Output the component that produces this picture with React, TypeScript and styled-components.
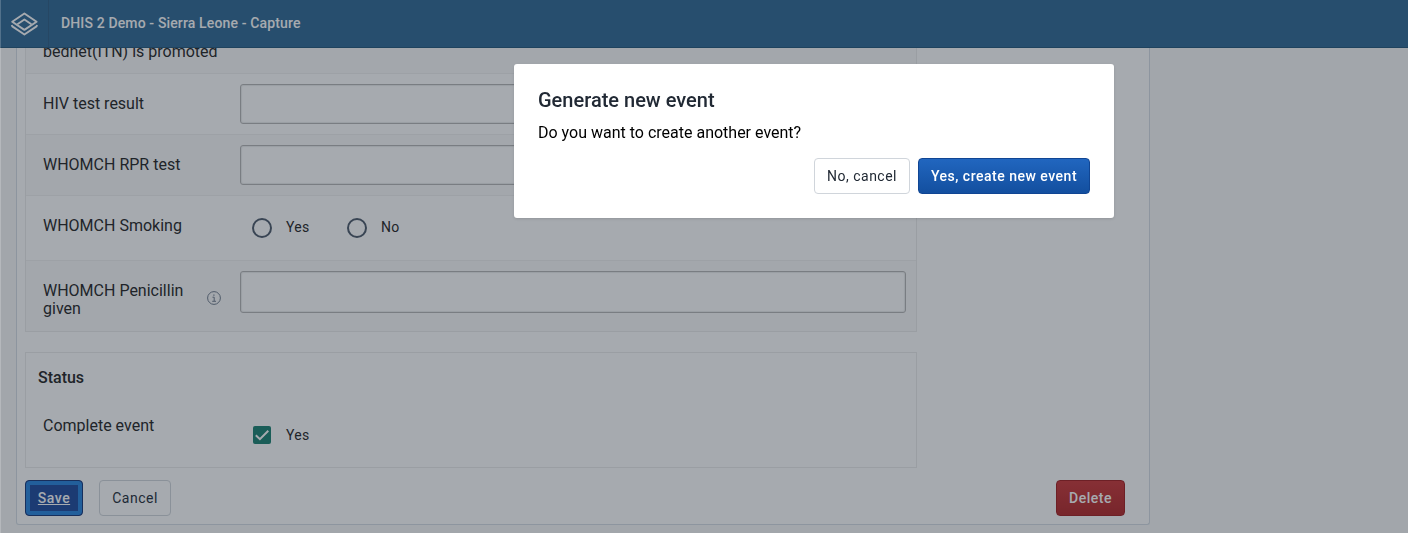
import React from 'react';
import styled, { createGlobalStyle, css } from 'styled-components';

const GlobalStyle = createGlobalStyle`
  * { box-sizing: border-box; }
  html, body { margin: 0; height: 100%; overflow: hidden; }
  body { font-family: Roboto, sans-serif; background: #f8f8f8; color: #212121; }
`;

const Page = styled.div`
  height: 533px;
  overflow: hidden;
  background: #f8f8f8;
`;

const HeaderBar = styled.header`
  display: flex;
  align-items: center;
  height: 48px;
  background: #2c6693;
  border-bottom: 1px solid #1f5479;
  color: #fff;
`;

const LogoLink = styled.div`
  display: flex;
  align-items: center;
  justify-content: center;
  width: 49px;
  height: 47px;
  border-right: 1px solid rgba(32, 32, 32, 0.15);
`;

const AppTitle = styled.div`
  padding-left: 12px;
  font-size: 14px;
  font-weight: 500;
  line-height: 47px;
  letter-spacing: 0.01em;
`;

const Viewport = styled.main`
  height: 485px;
  overflow: hidden;
`;

const Panel = styled.div`
  width: 1134px;
  height: 477px;
  margin-left: 16px;
  padding: 0 24px 0 8px;
  background: #fff;
  border: 1px solid #d5dde5;
  border-top: 0;
  border-radius: 0 0 3px 3px;
`;

const Section = styled.section<{ $continued?: boolean }>`
  width: 892px;
  border: 1px solid #ececec;
  border-top-width: ${(p) => (p.$continued ? 0 : 1)}px;
`;

const FieldRow = styled.div<{ $height: number; $shaded?: boolean; $pad?: number }>`
  display: flex;
  align-items: flex-start;
  height: ${(p) => p.$height}px;
  padding: ${(p) => p.$pad ?? 10}px 10px 0 17px;
  background: ${(p) => (p.$shaded ? '#fbfbfb' : '#fff')};
  & + & { border-top: 1px solid #f1f1f1; }
`;

const Label = styled.div`
  width: 162px;
  margin-right: 2px;
  padding-top: 11px;
  font-size: 16px;
  line-height: 18px;
  white-space: pre-line;
`;

const ScrolledLabel = styled(Label)`
  width: auto;
  margin-top: -5px;
  padding-top: 0;
`;

const InfoSlot = styled.div`
  display: flex;
  width: 33px;
  padding-top: 20px;
`;

const TextInput = styled.input<{ $tall?: boolean }>`
  flex: 1;
  height: ${(p) => (p.$tall ? 42 : 40)}px;
  border: 1px solid #b4b4b4;
  border-radius: 3px;
  background: #fff;
  box-shadow: inset 0 0 1px 1px rgba(48, 54, 60, 0.1);
`;

const Option = styled.div<{ $top: number }>`
  display: flex;
  align-items: center;
  gap: 14px;
  width: 95px;
  margin-top: ${(p) => p.$top}px;
  padding-left: 11px;
  font-size: 14px;
  line-height: 22px;
  letter-spacing: 0.35px;
`;

const Radio = styled.span`
  position: relative;
  top: 1px;
  width: 20px;
  height: 20px;
  margin-left: 1px;
  border: 2px solid #4a5768;
  border-radius: 50%;
`;

const CheckBox = styled.span`
  display: flex;
  width: 18px;
  height: 18px;
  margin: 0 1px 0 2px;
  border-radius: 2px;
  background: #177f6e;
`;

const StatusTitle = styled.h2`
  margin: 0;
  padding: 15px 0 0 12px;
  font-size: 16px;
  font-weight: 500;
  line-height: 20px;
`;

const Gap = styled.div`
  height: 20px;
`;

const Footer = styled.div`
  display: flex;
  gap: 16px;
  padding-top: 12px;
`;

const primary = css`
  border-color: #104593;
  background: linear-gradient(180deg, #2166bf 0%, #134f9f 100%);
  color: #fff;
  font-weight: 500;
`;
const destructive = css`
  margin-left: auto;
  border-color: #a01a1c;
  background: linear-gradient(180deg, #cb3334 0%, #b12324 100%);
  color: #fff;
  font-weight: 500;
`;
const focused = css`
  border-color: #123275;
  background: #19479c;
  box-shadow: inset 0 0 0 4px #2482de;
  color: #fff;
  font-weight: 500;
  text-decoration: underline;
`;
const variants = { primary, destructive, focused, secondary: css`` };

const Button = styled.button<{ $variant?: keyof typeof variants; $width: number }>`
  width: ${(p) => p.$width}px;
  height: 36px;
  padding: 0;
  border: 1px solid #d0d5db;
  border-radius: 4px;
  background: #fff;
  color: #212934;
  font: 400 14px/16px Roboto, sans-serif;
  letter-spacing: 0.5px;
  white-space: nowrap;
  ${(p) => variants[p.$variant ?? 'secondary']}
`;

const Backdrop = styled.div`
  position: fixed;
  inset: 0;
  display: flex;
  justify-content: center;
  align-items: flex-start;
  padding: 64px 0 0 219px;
  border-left: 1px solid rgba(255, 255, 255, 0.2);
  background: rgba(33, 43, 54, 0.4);
`;

const Dialog = styled.div`
  width: 600px;
  height: 154px;
  padding: 24px;
  border-radius: 3px;
  background: #fff;
  box-shadow: 0 1px 3px rgba(0, 0, 0, 0.12);
`;

const DialogTitle = styled.h1`
  margin: 0;
  color: #212934;
  font-size: 20px;
  font-weight: 500;
  line-height: 24px;
`;

const DialogText = styled.p`
  margin: 11px 0 15px;
  color: #000;
  font-size: 16px;
  line-height: 20px;
`;

const DialogActions = styled.div`
  display: flex;
  justify-content: flex-end;
  gap: 8px;
`;

const Logo = () => (
  <svg width="28" height="26" viewBox="0 0 28 26" fill="none" stroke="#fff" strokeWidth="1.9" strokeLinejoin="round">
    <path d="M14.4 2.5 26.6 10.7 14.4 18.9 2.2 10.7Z" />
    <path d="M7.4 13.3 14.4 8.5 21.4 13.3" />
    <path d="M1.7 14 2.3 15.4 14.4 23.5 26.5 15.4 27.1 14" />
  </svg>
);

const InfoIcon = () => (
  <svg width="14" height="14" viewBox="0 0 14 14" fill="none" stroke="#6e7a8a">
    <circle cx="7" cy="7" r="6.4" />
    <path d="M5.5 6.2H7.2V10M5.2 10.3H9" />
    <path d="M6.3 4.1H7.5" strokeWidth="1.3" />
  </svg>
);

const Check = () => (
  <svg width="18" height="18" viewBox="0 0 18 18" fill="none" stroke="#fff" strokeWidth="2">
    <path d="M2.8 9.2 6.9 13.1 15.3 4.7" />
  </svg>
);

export default function App() {
  return (
    <Page>
      <GlobalStyle />
      <HeaderBar>
        <LogoLink><Logo /></LogoLink>
        <AppTitle>DHIS 2 Demo - Sierra Leone - Capture</AppTitle>
      </HeaderBar>
      <Viewport>
        <Panel>
          <Section $continued>
            <FieldRow $height={25} $shaded $pad={0}>
              <ScrolledLabel>bednet(ITN) is promoted</ScrolledLabel>
            </FieldRow>
            <FieldRow $height={61}>
              <Label>HIV test result</Label><InfoSlot />
              <TextInput />
            </FieldRow>
            <FieldRow $height={61} $shaded>
              <Label>WHOMCH RPR test</Label><InfoSlot />
              <TextInput />
            </FieldRow>
            <FieldRow $height={65}>
              <Label>WHOMCH Smoking</Label><InfoSlot />
              <Option $top={10}><Radio />Yes</Option>
              <Option $top={10}><Radio />No</Option>
            </FieldRow>
            <FieldRow $height={71} $shaded>
              <Label>{'WHOMCH Penicillin\ngiven'}</Label>
              <InfoSlot><InfoIcon /></InfoSlot>
              <TextInput $tall />
            </FieldRow>
          </Section>
          <Gap />
          <Section>
            <StatusTitle>Status</StatusTitle>
            <FieldRow $height={79} $pad={18}>
              <Label>Complete event</Label><InfoSlot />
              <Option $top={18}><CheckBox><Check /></CheckBox>Yes</Option>
            </FieldRow>
          </Section>
          <Footer>
            <Button $variant="focused" $width={58}>Save</Button>
            <Button $width={72}>Cancel</Button>
            <Button $variant="destructive" $width={69}>Delete</Button>
          </Footer>
        </Panel>
      </Viewport>
      <Backdrop>
        <Dialog role="dialog">
          <DialogTitle>Generate new event</DialogTitle>
          <DialogText>Do you want to create another event?</DialogText>
          <DialogActions>
            <Button $width={96}>No, cancel</Button>
            <Button $variant="primary" $width={172}>Yes, create new event</Button>
          </DialogActions>
        </Dialog>
      </Backdrop>
    </Page>
  );
}
